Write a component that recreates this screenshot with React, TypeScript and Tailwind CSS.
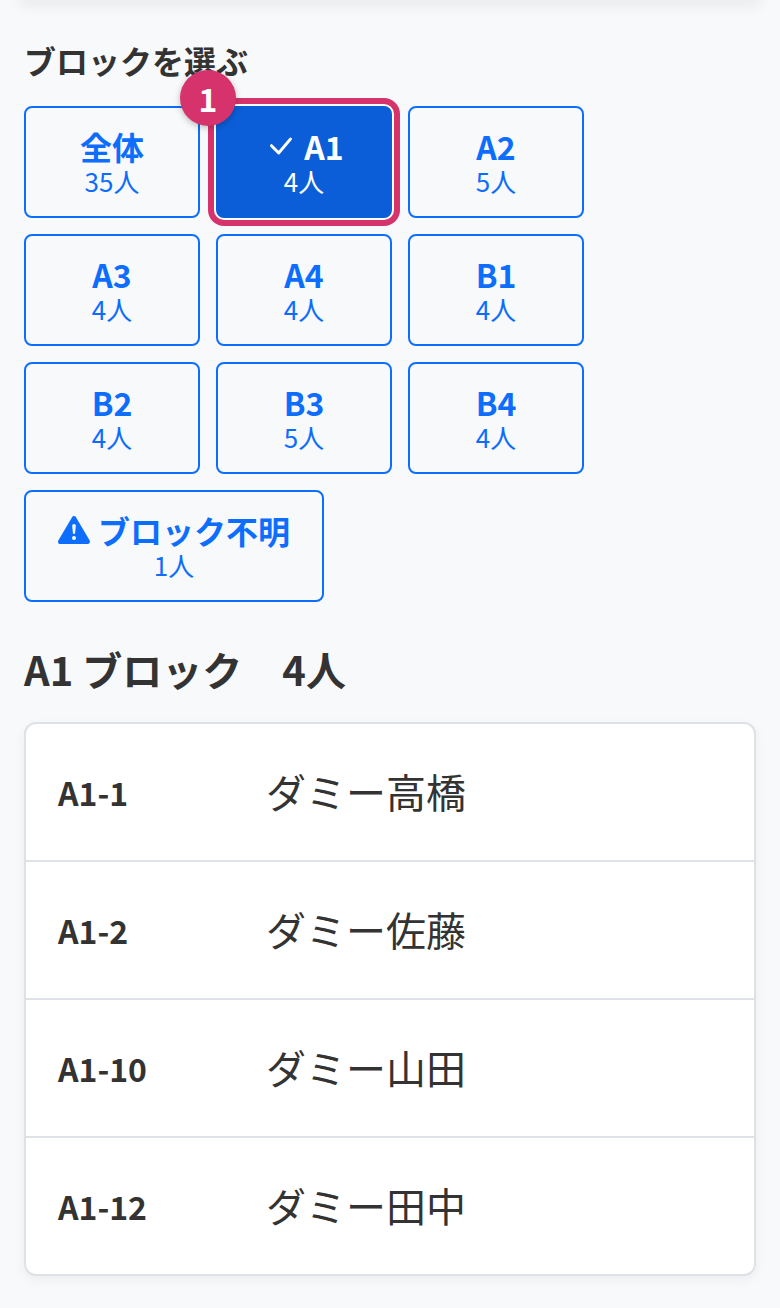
import React from "react";

const font = "font-['Noto_Sans_CJK_JP','Noto_Sans',sans-serif]";

function Block({ title, count, selected, wide, check, warn }: { title: string; count: string; selected?: boolean; wide?: boolean; check?: boolean; warn?: boolean }) {
  return (
    <button className={`relative flex h-[112px] flex-col items-center justify-center rounded-[8px] border-2 ${wide ? "w-[300px]" : "w-[176px]"} ${selected ? "border-[#0b5ed7] bg-[#0b5ed7] text-white shadow-[0_0_0_2px_#ffffff,0_0_0_8px_#d6336c]" : "border-[#0d6efd] bg-transparent text-[#0d6efd]"}`}>
      <span className="flex items-center justify-center gap-[8px] text-[32px] font-bold leading-[38px]">
        {check && (
          <svg width="32" height="32" viewBox="0 0 16 16" fill="currentColor"><path d="M12.736 3.97a.733.733 0 0 1 1.047 0c.286.289.29.756.01 1.05L7.88 12.01a.733.733 0 0 1-1.065.02L3.217 8.384a.757.757 0 0 1 0-1.06.733.733 0 0 1 1.047 0l3.052 3.093 5.4-6.425a.247.247 0 0 1 .02-.022Z" /></svg>
        )}
        {warn && (
          <svg width="32" height="32" viewBox="0 0 16 16" fill="currentColor"><path d="M8.982 1.566a1.13 1.13 0 0 0-1.96 0L.165 13.233c-.457.778.091 1.767.98 1.767h13.713c.889 0 1.438-.99.98-1.767L8.982 1.566zM8 5c.535 0 .954.462.9.995l-.35 3.507a.552.552 0 0 1-1.1 0L7.1 5.995A.905.905 0 0 1 8 5zm.002 6a1 1 0 1 1 0 2 1 1 0 0 1 0-2z" /></svg>
        )}
        {title}
      </span>
      <span className="text-[26px] font-normal leading-[32px]">{count}</span>
    </button>
  );
}

function Row({ id, name, last }: { id: string; name: string; last?: boolean }) {
  return (
    <div className={`flex items-center px-[32px] text-[#333333] ${last ? "h-[136px]" : "h-[138px] border-b-2 border-[#dee2e6]"}`}>
      <div className="w-[208px] text-[32px] font-bold">{id}</div>
      <div className="pb-[2px] text-[40px] font-normal leading-[56px]">{name}</div>
    </div>
  );
}

export default function App() {
  return (
    <div className={`h-[1308px] w-[780px] overflow-hidden bg-[#f8f9fa] ${font}`}>
      <div className="mx-[24px] h-0 shadow-[0_0_14px_5px_rgba(0,0,0,0.08)]" />
      <div className="px-[24px] pt-[36px]">
        <div className="text-[32px] font-bold leading-[48px] text-[#333333]">ブロックを選ぶ</div>
        <div className="relative mt-[22px] flex w-[576px] flex-wrap gap-[16px]">
          <Block title="全体" count="35人" />
          <Block title="A1" count="4人" selected check />
          <Block title="A2" count="5人" />
          <Block title="A3" count="4人" />
          <Block title="A4" count="4人" />
          <Block title="B1" count="4人" />
          <Block title="B2" count="4人" />
          <Block title="B3" count="5人" />
          <Block title="B4" count="4人" />
          <Block title="ブロック不明" count="1人" wide warn />
          <div className="absolute left-[156px] top-[-36px] flex h-[56px] w-[56px] items-center justify-center rounded-full bg-[#d6336c] text-[32px] font-bold text-white shadow-[0_2px_6px_rgba(0,0,0,0.25)]">1</div>
        </div>
        <div className="mt-[37px] text-[40px] font-bold leading-[60px] text-[#333333]">A1 ブロック　4人</div>
        <div className="mt-[23px] w-[732px] overflow-hidden rounded-[12px] border-2 border-[#dee2e6] bg-white shadow-[0_4px_12px_rgba(0,0,0,0.05)]">
          <Row id="A1-1" name="ダミー高橋" />
          <Row id="A1-2" name="ダミー佐藤" />
          <Row id="A1-10" name="ダミー山田" />
          <Row id="A1-12" name="ダミー田中" last />
        </div>
      </div>
    </div>
  );
}
